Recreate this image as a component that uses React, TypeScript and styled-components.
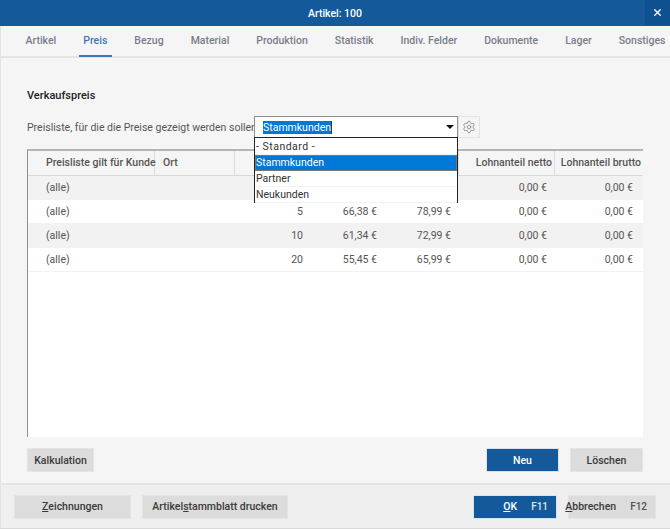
import React from 'react';
import styled, { createGlobalStyle } from 'styled-components';
import { Settings, X } from 'lucide-react';

const GlobalStyle = createGlobalStyle`
  html, body {
    margin: 0;
    padding: 0;
    background: #f5f5f5;
  }
  * {
    box-sizing: border-box;
  }
`;

const Window = styled.div`
  width: 670px;
  height: 529px;
  display: flex;
  flex-direction: column;
  background: #f5f5f5;
  border-bottom: 1px solid #d9d9d9;
  font-family: Roboto, 'Open Sans', sans-serif;
  font-size: 10.5px;
  color: #444;
  overflow: hidden;
`;

const TitleBar = styled.div`
  height: 26px;
  flex: none;
  display: flex;
  align-items: center;
  justify-content: center;
  position: relative;
  background: #145a9a;
  color: #fff;
  font-weight: 500;
`;

const CloseButton = styled.div`
  position: absolute;
  top: 0;
  right: 0;
  width: 25px;
  height: 25px;
  display: flex;
  align-items: center;
  justify-content: center;
  background: #0f5190;
`;

const TabBar = styled.div`
  height: 32px;
  flex: none;
  display: flex;
  gap: 18px;
  padding-left: 20px;
  border-bottom: 2px solid #e4e4e4;
  border-left: 1px solid #e2e2e2;
`;

const Tab = styled.div<{ $active?: boolean }>`
  height: 31px;
  padding: 0 4.5px;
  line-height: 29px;
  font-weight: 500;
  white-space: nowrap;
  color: ${(p) => (p.$active ? '#3f75b5' : '#7a7c8a')};
  border-bottom: 2px solid ${(p) => (p.$active ? '#3f75b5' : 'transparent')};
`;

const Content = styled.div`
  flex: 1;
  display: flex;
  flex-direction: column;
  padding: 30px 27px 11px 26px;
  border-left: 1px solid #e2e2e2;
`;

const Heading = styled.div`
  height: 15px;
  line-height: 15px;
  font-size: 11px;
  font-weight: 500;
  color: #222;
`;

const FilterRow = styled.div`
  height: 22px;
  margin-top: 13px;
  display: flex;
  align-items: center;
`;

const FilterLabel = styled.div`
  width: 227px;
  flex: none;
  color: #555;
  white-space: nowrap;
`;

const SelectWrap = styled.div`
  position: relative;
  width: 204px;
  height: 22px;
  flex: none;
`;

const SelectBox = styled.div`
  height: 22px;
  display: flex;
  align-items: center;
  justify-content: space-between;
  padding: 0 3px 0 8px;
  background: #fff;
  border: 1px solid #8f8f8f;
`;

const SelectedText = styled.span`
  background: #0078d7;
  color: #fff;
  line-height: 13px;
  border-right: 1px solid #3a3a3a;
`;

const Arrow = styled.span`
  width: 0;
  height: 0;
  border-left: 4px solid transparent;
  border-right: 4px solid transparent;
  border-top: 4px solid #111;
`;

const Dropdown = styled.div`
  position: absolute;
  top: 21px;
  left: 0;
  width: 204px;
  height: 66px;
  z-index: 2;
  background: #fff;
  border: 1px solid #222;
  padding-top: 1px;
  color: #333;
`;

const Option = styled.div<{ $selected?: boolean; $wide?: boolean }>`
  height: 16px;
  line-height: 15px;
  padding-left: 1px;
  letter-spacing: ${(p) => (p.$wide ? '0.5px' : '0')};
  background: ${(p) => (p.$selected ? '#0078d7' : '#fff')};
  color: ${(p) => (p.$selected ? '#fff' : '#333')};
  outline: ${(p) => (p.$selected ? '1px solid #777' : 'none')};
  outline-offset: -1px;
  border-bottom: 1px solid ${(p) => (p.$selected ? '#777' : '#f2f2f2')};
`;

const GearButton = styled.div`
  width: 22px;
  height: 22px;
  flex: none;
  display: flex;
  align-items: center;
  justify-content: center;
  border: 1px solid #e3e3e3;
  color: #777;
`;

const Table = styled.div`
  margin-top: 11px;
  flex: 1;
  background: #fff;
  border-top: 2px solid #b5b5b5;
  border-left: 1px solid #8f8f8f;
`;

const columns = '127px 80px 76px 74px 74px 96px 88px';

const HeaderRow = styled.div`
  height: 25px;
  display: grid;
  grid-template-columns: ${columns};
  background: #f5f5f5;
  border-bottom: 1px solid #d8d8d8;
`;

const HeaderCell = styled.div<{ $right?: boolean }>`
  padding: 0 ${(p) => (p.$right ? '2px' : '8px')};
  text-align: ${(p) => (p.$right ? 'right' : 'left')};
  line-height: 24px;
  font-weight: 500;
  color: #555;
  white-space: nowrap;
  border-right: 1px solid #dcdcdc;

  &:first-child {
    padding-left: 18px;
    padding-right: 0;
  }
  &:last-child {
    border-right: none;
  }
`;

const Row = styled.div<{ $alt?: boolean }>`
  height: 24px;
  display: grid;
  grid-template-columns: ${columns};
  background: ${(p) => (p.$alt ? '#f2f2f2' : '#fff')};
  border-bottom: 1px solid #f2f2f2;
`;

const Cell = styled.div<{ $right?: boolean }>`
  padding: 0 8px;
  text-align: ${(p) => (p.$right ? 'right' : 'left')};
  line-height: 23px;
  color: #555;
  white-space: nowrap;

  &:first-child {
    padding-left: 18px;
  }
  &:last-child {
    padding-right: 10px;
  }
`;

const ActionRow = styled.div`
  margin-top: 11px;
  display: flex;
  align-items: center;
  gap: 11px;
`;

const Spacer = styled.div`
  flex: 1;
`;

const Button = styled.div<{ $primary?: boolean; $width: number }>`
  width: ${(p) => p.$width}px;
  height: 24px;
  display: flex;
  align-items: center;
  justify-content: center;
  flex: none;
  font-weight: 500;
  white-space: nowrap;
  background: ${(p) => (p.$primary ? '#145a9a' : '#dcdcdc')};
  color: ${(p) => (p.$primary ? '#fff' : '#3a3a3a')};
  border: 1px solid ${(p) => (p.$primary ? '#d7e3ef' : '#e4e4e4')};
`;

const ShortcutButton = styled(Button)`
  justify-content: flex-end;
  gap: 14px;
  padding-right: 8px;
`;

const Shortcut = styled.span`
  font-size: 10px;
  opacity: 0.85;
`;

const Footer = styled.div`
  height: 45px;
  flex: none;
  display: flex;
  align-items: center;
  gap: 11px;
  padding: 0 14px 0 13px;
  background: #efefef;
  border-top: 2px solid #e4e4e4;
  border-left: 1px solid #e2e2e2;
`;

const rows = [
  { qty: '', net: '', gross: '' },
  { qty: '5', net: '66,38 €', gross: '78,99 €' },
  { qty: '10', net: '61,34 €', gross: '72,99 €' },
  { qty: '20', net: '55,45 €', gross: '65,99 €' },
];

const tabs = [
  'Artikel',
  'Preis',
  'Bezug',
  'Material',
  'Produktion',
  'Statistik',
  'Indiv. Felder',
  'Dokumente',
  'Lager',
  'Sonstiges',
];

export default function App() {
  return (
    <Window>
      <GlobalStyle />
      <TitleBar>
        Artikel: 100
        <CloseButton>
          <X size={11} strokeWidth={3} color="#fff" />
        </CloseButton>
      </TitleBar>
      <TabBar>
        {tabs.map((t) => (
          <Tab key={t} $active={t === 'Preis'}>
            {t}
          </Tab>
        ))}
      </TabBar>
      <Content>
        <Heading>Verkaufspreis</Heading>
        <FilterRow>
          <FilterLabel>Preisliste, für die die Preise gezeigt werden sollen:</FilterLabel>
          <SelectWrap>
            <SelectBox>
              <SelectedText>Stammkunden</SelectedText>
              <Arrow />
            </SelectBox>
            <Dropdown>
              <Option $wide>- Standard -</Option>
              <Option $selected>Stammkunden</Option>
              <Option>Partner</Option>
              <Option>Neukunden</Option>
            </Dropdown>
          </SelectWrap>
          <GearButton>
            <Settings size={14} strokeWidth={1.25} />
          </GearButton>
        </FilterRow>
        <Table>
          <HeaderRow>
            <HeaderCell>Preisliste gilt für Kunde</HeaderCell>
            <HeaderCell>Ort</HeaderCell>
            <HeaderCell $right />
            <HeaderCell $right />
            <HeaderCell $right />
            <HeaderCell $right>Lohnanteil netto</HeaderCell>
            <HeaderCell $right>Lohnanteil brutto</HeaderCell>
          </HeaderRow>
          {rows.map((r, i) => (
            <Row key={i} $alt={i % 2 === 0}>
              <Cell>(alle)</Cell>
              <Cell />
              <Cell $right>{r.qty}</Cell>
              <Cell $right>{r.net}</Cell>
              <Cell $right>{r.gross}</Cell>
              <Cell $right>0,00 €</Cell>
              <Cell $right>0,00 €</Cell>
            </Row>
          ))}
        </Table>
        <ActionRow>
          <Button $width={67}>Kalkulation</Button>
          <Spacer />
          <Button $primary $width={73}>
            Neu
          </Button>
          <Button $width={73}>Löschen</Button>
        </ActionRow>
      </Content>
      <Footer>
        <Button $width={117}>
          <span>
            <u>Z</u>eichnungen
          </span>
        </Button>
        <Button $width={146}>
          <span>
            Artikel<u>s</u>tammblatt drucken
          </span>
        </Button>
        <Spacer />
        <ShortcutButton $primary $width={84}>
          <span>
            <u>O</u>K
          </span>
          <Shortcut>F11</Shortcut>
        </ShortcutButton>
        <ShortcutButton $width={88}>
          <span>
            <u>A</u>bbrechen
          </span>
          <Shortcut>F12</Shortcut>
        </ShortcutButton>
      </Footer>
    </Window>
  );
}
